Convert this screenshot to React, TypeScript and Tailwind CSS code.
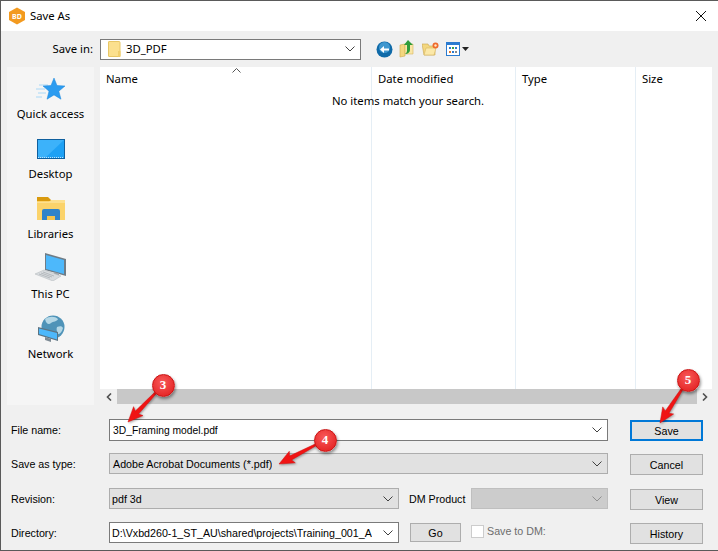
import type { ReactNode } from "react";

const PLACES = [
  { label: "Quick access", icon: <StarIcon />, shift: "mt-[1px] mb-[-1px]" },
  { label: "Desktop", icon: <DesktopIcon />, shift: "" },
  { label: "Libraries", icon: <LibrariesIcon />, shift: "" },
  { label: "This PC", icon: <PcIcon />, shift: "mt-[-2px] mb-[2px]" },
  { label: "Network", icon: <NetworkIcon />, shift: "" },
];

const CALLOUTS = [
  { n: 3, cx: 163, cy: 385, tx: 128, ty: 422 },
  { n: 4, cx: 325, cy: 440, tx: 279, ty: 464 },
  { n: 5, cx: 688, cy: 380, tx: 660, ty: 423 },
];

function StarIcon() {
  return (
    <svg width="32" height="26" viewBox="0 0 32 26">
      <path d="M4 8h9M1 12h9M3 16h8M1 20h6" stroke="#a9d8f7" strokeWidth="1" />
      <path d="M19 1l3 7.500 8 .5-6.200 5.200 2.200 8-7-4.300-7 4.300 2-8-6-5.200 8-.5z" fill="#2c9cf0" stroke="#1b86dc" strokeWidth=".5" />
    </svg>
  );
}

function DesktopIcon() {
  return (
    <svg width="28" height="21" viewBox="0 0 28 21">
      <rect x=".5" y=".5" width="27" height="19" fill="#1ea1f5" stroke="#0f5f9e" />
      <path d="M1 1h26L8 19H1z" fill="#3cb2fa" />
      <path d="M1 18.500h26" stroke="#bfe4fb" strokeDasharray="1 1" />
    </svg>
  );
}

function LibrariesIcon() {
  return (
    <svg width="28" height="24" viewBox="0 0 28 24">
      <path d="M0 0h11l3 3h0v3H0z" fill="#d99a0e" />
      <path d="M0 4h28v19H0z" fill="#fbd36b" />
      <path d="M0 5h12l2-2h14v3H0z" fill="#fde08f" />
      <path d="M5 23v-9a2 2 0 012-2h14a2 2 0 012 2v9h-5v-4h-8v4z" fill="#2f83c9" />
      <path d="M10 19h8v4h-8z" fill="#f5c44e" />
    </svg>
  );
}

function PcIcon() {
  return (
    <svg width="32" height="28" viewBox="0 0 32 28">
      <path d="M10 0l21 6v17l-21-6z" fill="#6f7c86" />
      <path d="M11 2l18 5v14L11 16z" fill="#4db8fb" />
      <path d="M19 19l5 1.500v3l-5-1z" fill="#9aa4ac" />
      <path d="M0 21l9-4 17 6-8 5z" fill="#d8dcdf" stroke="#aeb4b8" strokeWidth=".5" />
      <path d="M4 21l11 4M6 20l11 4M8 19l11 4" stroke="#9da3a8" strokeWidth=".6" />
    </svg>
  );
}

function NetworkIcon() {
  return (
    <svg width="28" height="29" viewBox="0 0 28 29">
      <circle cx="16" cy="12" r="11.500" fill="#4f93b8" />
      <path d="M8 4c4-3 10-3 13 0-1 3-5 2-7 4s-5 1-6-4zM20 12c3-1 5-1 6 1-1 4-3 6-5 6-1-2-2-5-1-7z" fill="#b4d7e6" />
      <path d="M1 12l20 5v9L1 20z" fill="#5d7482" />
      <path d="M2 13.500l18 4.500v6.500L2 19z" fill="#4db8fb" />
      <path d="M8 22l6 2v3l-6-2z" fill="#7d8a94" />
    </svg>
  );
}

function Chevron({ color = "#404040" }: { color?: string }) {
  return (
    <svg width="10" height="6" viewBox="0 0 10 6" fill="none" stroke={color} strokeWidth="1">
      <path d="M.500.500L5 5 9.500.500" />
    </svg>
  );
}

function Combo({
  width,
  height = "h-[21px]",
  disabled,
  white,
  children,
}: {
  width: string;
  height?: string;
  disabled?: boolean;
  white?: boolean;
  children?: ReactNode;
}) {
  return (
    <div
      className={`${width} ${height} flex items-center justify-between pl-[2px] pr-[5px] border whitespace-nowrap overflow-hidden ${
        white ? "bg-white border-[#7a7a7a]" : disabled ? "bg-[#cccccc] border-[#bfbfbf]" : "bg-[#e1e1e1] border-[#adadad]"
      }`}
    >
      <span className="overflow-hidden">{children}</span>
      <span className="shrink-0 ml-1">
        <Chevron color={disabled ? "#8f8f8f" : "#404040"} />
      </span>
    </div>
  );
}

function Btn({ width, height = "h-[21px]", focus, children }: { width: string; height?: string; focus?: boolean; children: ReactNode }) {
  return (
    <div
      className={`${width} ${height} mt-[1px] flex items-center justify-center bg-[#e1e1e1] ${
        focus ? "border-2 border-[#0078d7]" : "border border-[#adadad]"
      }`}
    >
      {children}
    </div>
  );
}

function Arrow({ cx, cy, tx, ty }: { cx: number; cy: number; tx: number; ty: number }) {
  const len = Math.hypot(tx - cx, ty - cy);
  const ux = (tx - cx) / len;
  const uy = (ty - cy) / len;
  const px = -uy;
  const py = ux;
  const at = (d: number, w: number) => `${cx + ux * d + px * w},${cy + uy * d + py * w}`;
  const points = [at(6, 0.8), at(len - 13, 2.2), at(len - 15, 6.5), at(len, 0), at(len - 15, -6.5), at(len - 13, -2.2), at(6, -0.8)].join(" ");
  return <polygon points={points} fill="#f01414" stroke="#d40d0d" strokeWidth=".5" />;
}

export default function App() {
  return (
    <div className="relative w-[718px] h-[551px] overflow-hidden flex flex-col bg-[#f0f0f0] border-l border-b border-t border-[#5a5a5a] text-[11.3px] leading-[16px] text-[#000] font-['Noto_Sans',sans-serif]">
      {/* Title bar */}
      <div className="h-[30px] shrink-0 bg-white flex items-center pl-[7px] pr-[11px]">
        <svg width="18" height="18" viewBox="0 0 18 18">
          <path d="M9 .5l8 4.500v8l-8 4.500-8-4.500V5z" fill="#f39a1f" />
          <text x="9" y="12" textAnchor="middle" fontSize="7" fontWeight="700" fill="#fff">
            BD
          </text>
        </svg>
        <span className="ml-[4px]">Save As</span>
        <svg className="ml-auto" width="12" height="12" viewBox="0 0 12 12" stroke="#111" strokeWidth="1">
          <path d="M1 1l10 10M11 1L1 11" />
        </svg>
      </div>

      {/* Save in row */}
      <div className="h-[36px] shrink-0 flex items-center">
        <span className="w-[92px] text-right">Save in:</span>
        <div className="ml-[7px] w-[261px] h-[21px] bg-white border border-[#7a7a7a] flex items-center pl-[7px] pr-[5px]">
          <svg width="13" height="16" viewBox="0 0 13 16">
            <path d="M.500 1a.500.500 0 01.500-.500h10a1 1 0 011 1V15.500H1a.500.500 0 01-.500-.500z" fill="#fbe08e" stroke="#e8c766" />
            <path d="M10 10h2.500v5.500H10z" fill="#f1cf6d" />
          </svg>
          <span className="ml-[5px]">3D_PDF</span>
          <span className="ml-auto">
            <Chevron />
          </span>
        </div>
        <div className="ml-[15px] flex items-center">
          <svg width="17" height="17" viewBox="0 0 17 17">
            <circle cx="8.500" cy="8.500" r="8" fill="#0f6aa8" />
            <circle cx="8.500" cy="6.500" r="5.500" fill="#3f97cf" />
            <path d="M13 7.500H8V5L4 8.500 8 12V9.500h5z" fill="#fff" />
          </svg>
          <svg className="ml-[6px]" width="16" height="18" viewBox="0 0 16 18">
            <path d="M1 5l5-1v12l-5 1z" fill="#f3d77f" stroke="#cfa94c" strokeWidth=".6" />
            <path d="M6 4h8v10H6z" fill="#f9e6a6" stroke="#d6b65f" strokeWidth=".6" />
            <path d="M9 0l5 5h-3v5c0 2-2 4-5 4 2-1 2-3 2-4V5H5z" fill="#2f9c3a" />
          </svg>
          <svg className="ml-[7px]" width="17" height="14" viewBox="0 0 17 14">
            <path d="M0 2h6l1 2h6v9H2z" fill="#f3d77f" stroke="#c9a54c" strokeWidth=".6" />
            <path d="M2 13l2-7h10l-2 7z" fill="#fbe8a8" stroke="#d6b65f" strokeWidth=".6" />
            <circle cx="13.500" cy="3.500" r="3" fill="#ef6a2c" />
            <circle cx="13.500" cy="3.500" r="1.200" fill="#ffe7c2" />
          </svg>
          <svg className="ml-[7px]" width="14" height="14" viewBox="0 0 14 14">
            <rect x=".5" y=".5" width="13" height="13" fill="#fff" stroke="#2b7bd0" />
            <path d="M1 1h12v2H1z" fill="#2b7bd0" />
            <path d="M3 5h2v2H3z" fill="#2b7bd0" />
            <path d="M6 5h2v2H6z" fill="#39a047" />
            <path d="M9 5h2v2H9z" fill="#2b7bd0" />
            <path d="M3 9h2v2H3z" fill="#e0762c" />
            <path d="M6 9h2v2H6z" fill="#2b7bd0" />
            <path d="M9 9h2v2H9z" fill="#8a8a8a" />
          </svg>
          <svg className="ml-[2px]" width="7" height="4" viewBox="0 0 7 4">
            <path d="M0 0h7L3.500 4z" fill="#222" />
          </svg>
        </div>
      </div>

      {/* Places + file list */}
      <div className="h-[338px] shrink-0 flex">
        <div className="ml-[6px] w-[87px] bg-[#f5f5f5] flex flex-col pt-[9px]">
          {PLACES.map((p) => (
            <div key={p.label} className="h-[60px] flex flex-col items-center">
              <div className={`h-[26px] flex items-center justify-center ${p.shift}`}>{p.icon}</div>
              <span className="mt-[4px] whitespace-nowrap">{p.label}</span>
            </div>
          ))}
        </div>
        <div className="ml-[6px] w-[612px] flex flex-col">
          <div className="relative h-[322px] bg-white flex">
            <div className="w-[272px] pl-[6px] pt-[4px] border-r border-[#e5eef5]">Name</div>
            <div className="w-[144px] pl-[6px] pt-[4px] border-r border-[#e5eef5]">Date modified</div>
            <div className="w-[120px] pl-[6px] pt-[4px] border-r border-[#e5eef5]">Type</div>
            <div className="flex-1 pl-[6px] pt-[4px]">Size</div>
            <svg className="absolute left-[132px] top-[1px]" width="9" height="5" viewBox="0 0 9 5" fill="none" stroke="#555">
              <path d="M.500 4.500l4-4 4 4" />
            </svg>
            <span className="absolute left-[232px] top-[26px]">No items match your search.</span>
          </div>
          <div className="h-[15px] flex">
            <div className="w-[17px] flex items-center justify-center bg-[#f0f0f0]">
              <svg width="6" height="8" viewBox="0 0 6 8" fill="none" stroke="#505050" strokeWidth="1.600">
                <path d="M5 .500L1.500 4 5 7.500" />
              </svg>
            </div>
            <div className="flex-1 bg-[#c8c8c8]" />
            <div className="w-[15px] flex items-center justify-center bg-[#f0f0f0]">
              <svg width="6" height="8" viewBox="0 0 6 8" fill="none" stroke="#505050" strokeWidth="1.600">
                <path d="M1 .500L4.500 4 1 7.500" />
              </svg>
            </div>
          </div>
        </div>
      </div>

      {/* Form */}
      <div className="ml-[10px] mt-[14px] grid grid-cols-[98px_290px_10px_62px_137px_22px_73px] grid-rows-[34px_35px_34px_22px] items-start text-[10.7px] font-['Liberation_Sans',sans-serif]">
        <span className="pt-[3px]">File name:</span>
        <div className="col-span-4">
          <Combo width="w-[499px]" height="h-[22px]" white>
            <span className="pl-[1px] text-[10.3px]">3D_Framing model.pdf</span>
          </Combo>
        </div>
        <div className="col-start-7">
          <Btn width="w-[73px]" focus>
            Save
          </Btn>
        </div>

        <span className="pt-[3px]">Save as type:</span>
        <div className="col-span-4">
          <Combo width="w-[499px]">
            <span className="pl-[1px]">Adobe Acrobat Documents (*.pdf)</span>
          </Combo>
        </div>
        <div className="col-start-7">
          <Btn width="w-[73px]">Cancel</Btn>
        </div>

        <span className="pt-[3px]">Revision:</span>
        <Combo width="w-[290px]">pdf 3d</Combo>
        <span className="col-start-4 pt-[3px] whitespace-nowrap">DM Product</span>
        <Combo width="w-[137px]" disabled />
        <div className="col-start-7">
          <Btn width="w-[73px]">View</Btn>
        </div>

        <span className="pt-[3px]">Directory:</span>
        <Combo width="w-[290px]" white>
          D:\Vxbd260-1_ST_AU\shared\projects\Training_001_A
        </Combo>
        <div className="col-start-4 pl-[1px]">
          <Btn width="w-[51px]" height="h-[19px]">
            Go
          </Btn>
        </div>
        <div className="mt-[1px] flex items-center whitespace-nowrap text-[#6d6d6d]">
          <span className="w-[13px] h-[13px] bg-white border border-[#cccccc] mr-[3px]" />
          Save to DM:
        </div>
        <div className="col-start-7">
          <Btn width="w-[73px]">History</Btn>
        </div>
      </div>

      {/* Numbered callouts over the form */}
      <svg className="absolute left-[-1px] top-[-1px] pointer-events-none drop-shadow-[1px_1px_1px_rgba(0,0,0,0.35)]" width="718" height="551">
        {CALLOUTS.map((c) => (
          <Arrow key={c.n} cx={c.cx} cy={c.cy} tx={c.tx} ty={c.ty} />
        ))}
      </svg>
      {CALLOUTS.map((c) => (
        <div
          key={c.n}
          className="absolute w-[23px] h-[23px] rounded-full bg-[radial-gradient(circle_at_45%_35%,#f85a5a,#e01818)] border border-[#c91212] shadow-[1px_2px_3px_rgba(0,0,0,0.4)] flex items-center justify-center font-bold text-white text-[13px] font-['Liberation_Serif',serif]"
          style={{ left: c.cx - 12.5, top: c.cy - 12.5 }}
        >
          {c.n}
        </div>
      ))}
    </div>
  );
}
